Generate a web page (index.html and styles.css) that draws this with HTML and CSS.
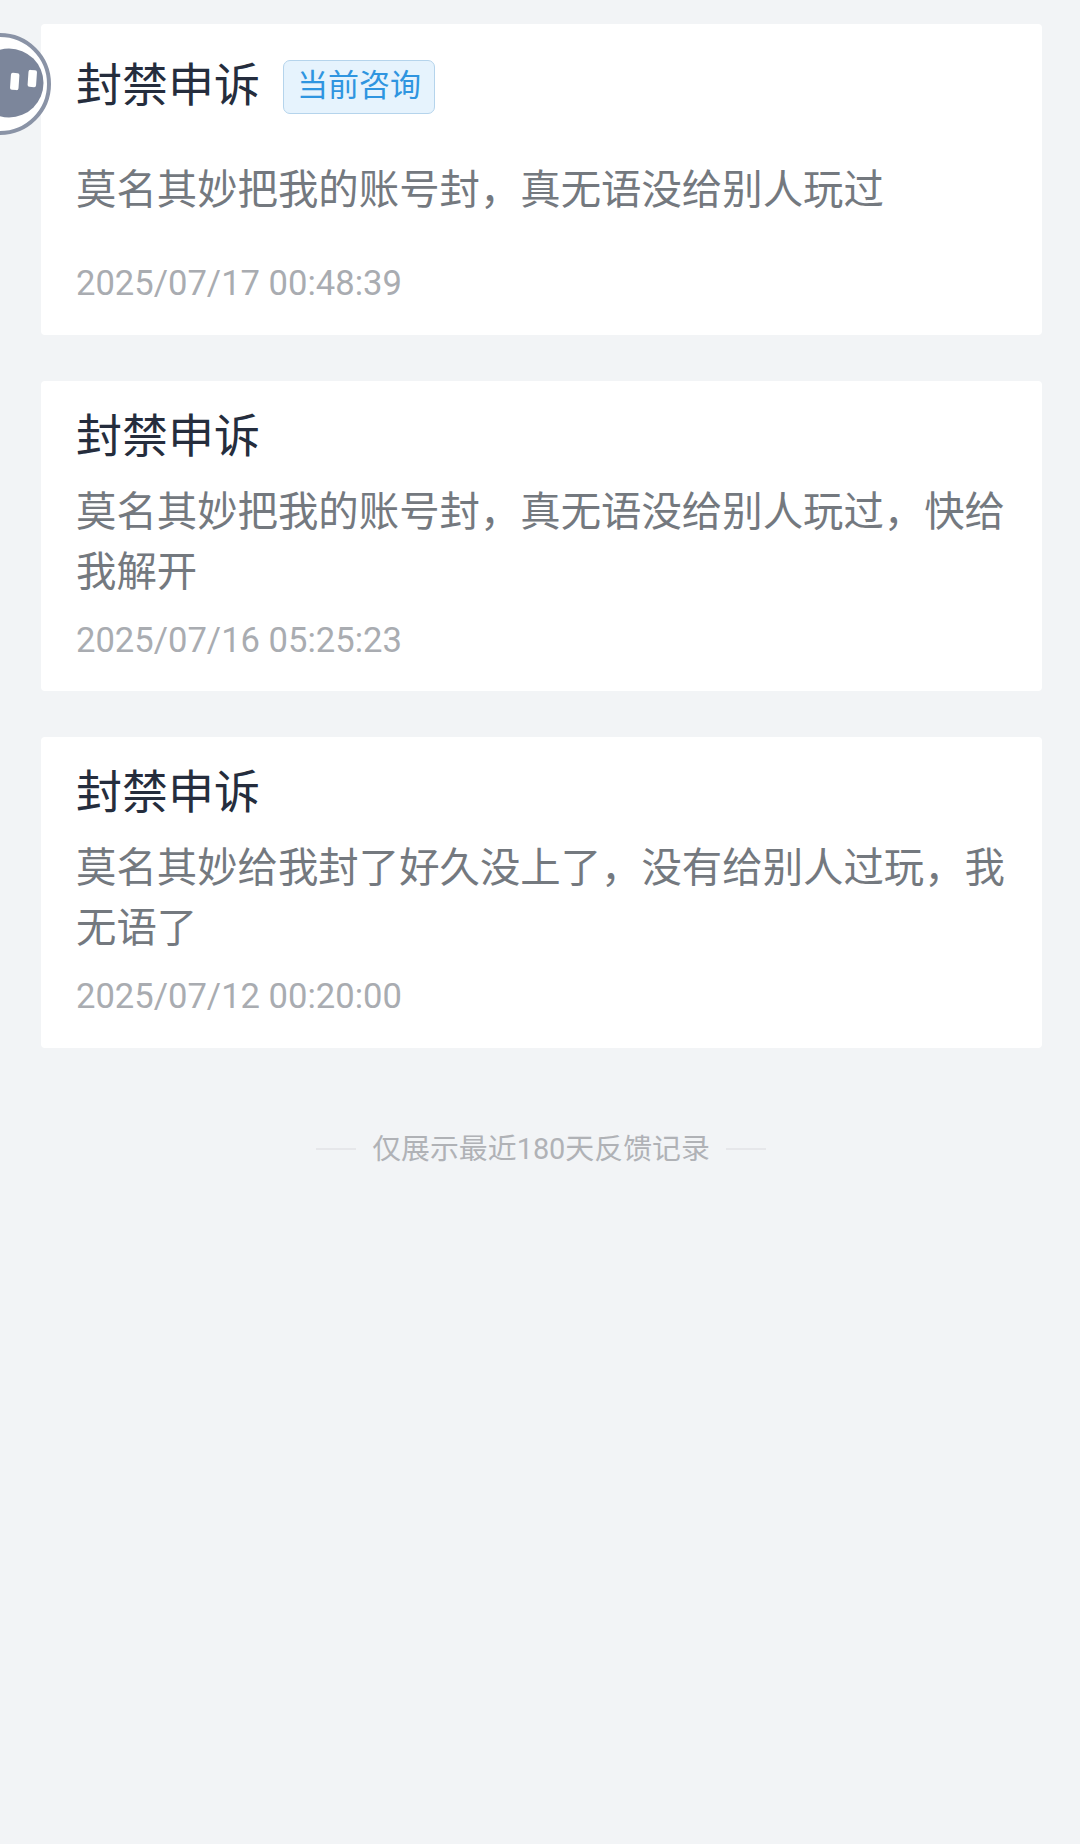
FILE: index.html
```html
<!DOCTYPE html>
<html lang="zh-CN">
<head>
    <meta charset="UTF-8">
    <meta name="viewport" content="width=device-width, initial-scale=1.0">
    <title>反馈记录</title>
    <link rel="stylesheet" href="styles.css">
</head>
<body>
    <div class="float-ball">
        <svg viewBox="0 0 60 110" width="60" height="110">
            <circle cx="0" cy="55" r="49" fill="#fff" stroke="#8a93a6" stroke-width="4"/>
            <circle cx="9" cy="54" r="34.5" fill="#7c869b"/>
            <rect x="10.5" y="44" width="8.5" height="17" rx="2" fill="#fff" transform="rotate(4 15 52)"/>
            <rect x="28" y="41" width="8.5" height="17" rx="2" fill="#fff" transform="rotate(4 32 50)"/>
        </svg>
    </div>

    <div class="list">
        <div class="card card-current">
            <div class="card-head">
                <span class="card-title">封禁申诉</span>
                <span class="tag">当前咨询</span>
            </div>
            <p class="card-text">莫名其妙把我的账号封，真无语没给别人玩过</p>
            <div class="card-time">2025/07/17 00:48:39</div>
        </div>

        <div class="card">
            <div class="card-head">
                <span class="card-title">封禁申诉</span>
            </div>
            <p class="card-text">莫名其妙把我的账号封，真无语没给别人玩过，快给我解开</p>
            <div class="card-time">2025/07/16 05:25:23</div>
        </div>

        <div class="card">
            <div class="card-head">
                <span class="card-title">封禁申诉</span>
            </div>
            <p class="card-text">莫名其妙给我封了好久没上了，没有给别人过玩，我无语了</p>
            <div class="card-time">2025/07/12 00:20:00</div>
        </div>
    </div>

    <div class="list-end">
        <span class="list-end-line"></span>
        <span class="list-end-text">仅展示最近180天反馈记录</span>
        <span class="list-end-line"></span>
    </div>
</body>
</html>
```

FILE: styles.css
```css
* {
    box-sizing: border-box;
}

body {
    margin: 0;
    min-height: 1844px;
    background: #f2f4f6;
    font-family: "Roboto", "Noto Sans CJK SC", sans-serif;
}

.float-ball {
    position: absolute;
    left: 0;
    top: 29px;
    line-height: 0;
}

.list {
    display: flex;
    flex-direction: column;
    gap: 46px;
    padding: 24px 38px 0 41px;
}

.card {
    height: 310.5px;
    padding: 21px 35px 0;
    background: #fff;
    border-radius: 4px;
}

.card-head {
    display: flex;
    align-items: center;
    height: 68px;
}

.card-title {
    font-size: 46px;
    line-height: 68px;
    color: #252d3d;
}

.tag {
    margin: 3px 0 0 23px;
    padding: 0 13px;
    height: 54px;
    line-height: 50px;
    font-size: 31px;
    color: #2f95e0;
    background: #e6f3fd;
    border: 1px solid #b5d4ec;
    border-radius: 7px;
}

.card-text {
    margin: 13px 0 0;
    font-size: 40.4px;
    line-height: 60px;
    color: #74797f;
}

.card-time {
    margin-top: 12px;
    font-size: 34.6px;
    line-height: 50px;
    color: #a9acb1;
}

.card-current {
    padding-top: 27px;
}

.card-current .card-text {
    margin-top: 42px;
}

.card-current .card-time {
    margin-top: 37px;
}

.list-end {
    display: flex;
    justify-content: center;
    align-items: center;
    gap: 16px;
    margin-top: 81px;
    padding-left: 2px;
}

.list-end-line {
    width: 40px;
    height: 2px;
    background: #e6e7ea;
}

.list-end-text {
    font-size: 28.9px;
    line-height: 40px;
    color: #b0b2b6;
}
```
